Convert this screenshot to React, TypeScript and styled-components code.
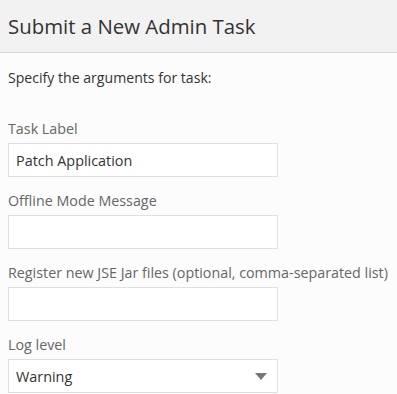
import React from "react";
import styled, { createGlobalStyle } from "styled-components";

const Global = createGlobalStyle`
  html, body { margin: 0; padding: 0; background: #fcfcfc; }
  body { font-family: "Open Sans", "Noto Sans", sans-serif; color: #333; }
  * { box-sizing: border-box; }
`;

const Page = styled.div`
  width: 397px;
  height: 394px;
  overflow: hidden;
  background: #fcfcfc;
`;

const Header = styled.header`
  height: 53px;
  background: #f2f2f2;
  border-bottom: 1px solid #d6d6d6;
  display: flex;
  align-items: center;
  padding: 0 8px;
`;

const Title = styled.h1`
  margin: 0;
  font-size: 20.4px;
  font-weight: 400;
  color: #333;
`;

const Body = styled.div`
  padding: 15px 8px 0;
  display: flex;
  flex-direction: column;
  gap: 15px;
`;

const Intro = styled.p`
  margin: 0 0 17px;
  font-size: 14.1px;
  line-height: 20px;
  color: #333;
`;

const Field = styled.div`
  display: flex;
  flex-direction: column;
`;

const Label = styled.label`
  font-size: 14.3px;
  color: #666;
  line-height: 18px;
  margin-bottom: 5px;
  white-space: nowrap;
`;

const Input = styled.div`
  width: 270px;
  height: 34px;
  border: 1px solid #e0e0e0;
  background: #fff;
  display: flex;
  align-items: center;
  padding: 0 7px;
  font-size: 14.4px;
  color: #333;
`;

const Select = styled(Input)`
  justify-content: space-between;
  padding-right: 10px;
`;

const Caret = styled.span`
  width: 0;
  height: 0;
  border-left: 6px solid transparent;
  border-right: 6px solid transparent;
  border-top: 7px solid #777;
`;

export default function App() {
  return (
    <Page>
      <Global />
      <Header>
        <Title>Submit a New Admin Task</Title>
      </Header>
      <Body>
        <Intro>Specify the arguments for task:</Intro>
        <Field>
          <Label>Task Label</Label>
          <Input>Patch Application</Input>
        </Field>
        <Field>
          <Label>Offline Mode Message</Label>
          <Input />
        </Field>
        <Field>
          <Label>Register new JSE Jar files (optional, comma-separated list)</Label>
          <Input />
        </Field>
        <Field>
          <Label>Log level</Label>
          <Select>
            <span>Warning</span>
            <Caret />
          </Select>
        </Field>
      </Body>
    </Page>
  );
}
